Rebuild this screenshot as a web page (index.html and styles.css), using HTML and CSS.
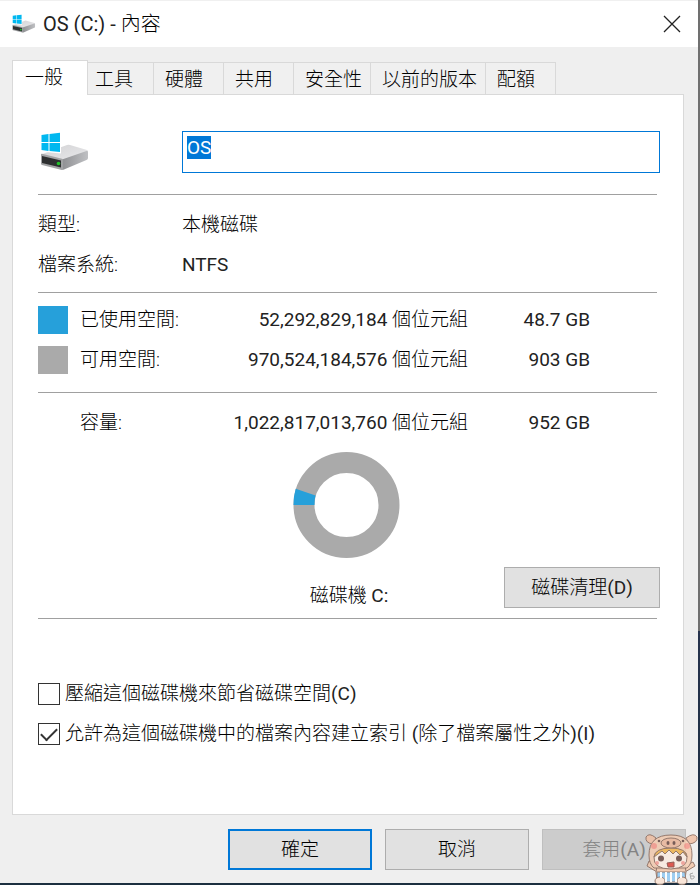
FILE: index.html
```html
<!DOCTYPE html>
<html lang="zh-Hant">
<head>
<meta charset="utf-8">
<title>OS (C:) - 內容</title>
<link rel="stylesheet" href="styles.css">
</head>
<body>
<svg class="defs" aria-hidden="true">
  <defs>
    <linearGradient id="driveTop" x1="0" y1="0" x2="1" y2="1">
      <stop offset="0" stop-color="#d2d2d4"/><stop offset="1" stop-color="#e9e9eb"/>
    </linearGradient>
    <linearGradient id="driveSide" x1="0" y1="0" x2="1" y2="0">
      <stop offset="0" stop-color="#8f9093"/><stop offset="1" stop-color="#bfc0c3"/>
    </linearGradient>
  </defs>
  <symbol id="drive" viewBox="0 0 50 40">
    <path fill="url(#driveTop)" d="M1 22.500L27 13q1.500-.5 3 0l17 5q2 1 0 2L23 28z"/>
    <path fill="url(#driveSide)" d="M22 27.500L46.500 19q1.500-.5 1.500 1v6q0 1.500-1.500 2L24 37.500q-2 .8-2-1z"/>
    <path fill="#a2a3a5" d="M1 22.500q0-1 1-.8l20 5q1 .3 1 1.300v9q0 1.200-1.200.9L2 33q-1-.3-1-1.300z"/>
    <path fill="#2d2f30" d="M2 24l19 4.500v7L2 31z"/>
    <circle cx="18.500" cy="31.500" r="1.800" fill="#22c02a"/>
    <path fill="#fff" d="M.5 1.500L21 0v21.500L.5 19.500z"/>
    <path fill="#00b8f0" d="M1.500 3l7-1v8h-7zM9.500 1.900L20 .8V10H9.500zM1.500 11h7v8l-7-1zM9.500 11H20v9l-10.500-1z"/>
  </symbol>
</svg>
<main class="dialog">
  <header class="titlebar">
    <svg class="title-icon" aria-hidden="true"><use href="#drive"/></svg>
    <h1 class="title"><span class="latin">OS (C:) - </span>內容</h1>
    <button class="close" type="button" aria-label="關閉">
      <svg viewBox="0 0 16 16" aria-hidden="true"><path d="M0 0L16 16M16 0L0 16"/></svg>
    </button>
  </header>

  <nav class="tabs" role="tablist">
    <button class="tab tab-active" type="button" role="tab" aria-selected="true">一般</button>
    <button class="tab" type="button" role="tab">工具</button>
    <button class="tab" type="button" role="tab">硬體</button>
    <button class="tab" type="button" role="tab">共用</button>
    <button class="tab" type="button" role="tab">安全性</button>
    <button class="tab" type="button" role="tab">以前的版本</button>
    <button class="tab" type="button" role="tab">配額</button>
  </nav>

  <section class="panel">
    <div class="identity">
      <svg class="drive-icon" aria-hidden="true"><use href="#drive"/></svg>
      <input id="volume" class="volume latin" type="text" value="OS" aria-label="磁碟機名稱" spellcheck="false">
    </div>
    <hr>
    <dl class="facts">
      <dt>類型:</dt><dd>本機磁碟</dd>
      <dt>檔案系統:</dt><dd class="latin">NTFS</dd>
    </dl>
    <hr>
    <div class="sizes sizes-parts">
      <span class="swatch swatch-used"></span><span>已使用空間:</span><span class="amount"><span class="latin">52,292,829,184</span> 個位元組</span><span class="amount latin">48.7 GB</span>
      <span class="swatch swatch-free"></span><span>可用空間:</span><span class="amount"><span class="latin">970,524,184,576</span> 個位元組</span><span class="amount latin">903 GB</span>
    </div>
    <hr>
    <div class="sizes sizes-total">
      <span></span><span>容量:</span><span class="amount"><span class="latin">1,022,817,013,760</span> 個位元組</span><span class="amount latin">952 GB</span>
    </div>
    <svg class="donut" viewBox="0 0 108 108" aria-hidden="true">
      <circle cx="54" cy="54" r="42.500" fill="none" stroke="#aaa" stroke-width="21"/>
      <path fill="#26a0da" d="M1 54A53 53 0 0 1 3.200 37.800L23 44.500A32 32 0 0 0 22 54z"/>
    </svg>
    <div class="drive-row">
      <span class="drive-name">磁碟機 <span class="latin">C:</span></span>
      <button class="btn cleanup" type="button">磁碟清理<span class="latin">(D)</span></button>
    </div>
    <hr>
    <div class="options">
      <label class="option"><input type="checkbox"><span>壓縮這個磁碟機來節省磁碟空間<span class="latin">(C)</span></span></label>
      <label class="option"><input type="checkbox" checked><span>允許為這個磁碟機中的檔案內容建立索引 <span class="latin">(</span>除了檔案屬性之外<span class="latin">)(I)</span></span></label>
    </div>
  </section>

  <footer class="actions">
    <button class="btn btn-default" type="button">確定</button>
    <button class="btn" type="button">取消</button>
    <button class="btn" type="button" disabled>套用<span class="latin">(A)</span></button>
  </footer>
</main>

<svg class="mascot" viewBox="0 0 54 52" aria-hidden="true">
  <g stroke="#8a6a5c" stroke-width="1" stroke-linejoin="round">
    <path fill="#f3c8ac" d="M11 32L4 28 2 33l10 6zM41 32l7-3 2 4-10 6z"/>
    <path fill="#f3c8ac" d="M12 32q-2 8 0 14h28q2-7 0-14z"/>
    <path fill="#f0c0a4" d="M11 5Q4-1 1 4q-1 6 7 7zM41 5q8-6 11-1 1 6-8 7z"/>
    <path fill="#f5cdb2" d="M4 22Q4 2 26 2q21 0 21 20 0 9-5 13H9Q4 31 4 22z"/>
    <path fill="#fff0e5" d="M9 24q0-8 17-8t16 8q1 11-16 12Q8 36 9 24z"/>
    <path fill="#f2b54f" d="M9 24q1-9 17-9 15 0 16 9l-4-5-3 3-4-4-3 3-4-4-4 4-3-3z"/>
    <ellipse cx="26" cy="10" rx="10" ry="5" fill="#eeb99c"/>
    <path fill="#8fc8f2" d="M12 39h28l1 10H12z"/>
    <ellipse cx="15" cy="48" rx="5" ry="4" fill="#fbe4d5"/>
    <ellipse cx="37" cy="48" rx="5" ry="4" fill="#fbe4d5"/>
  </g>
  <path stroke="#fff" stroke-width="2" d="M16 39v6M21 39v10M26 39v10M31 39v10M36 39v6" fill="none"/>
  <g fill="#6a4a44">
    <ellipse cx="23" cy="10" rx="1.500" ry="2"/><ellipse cx="29" cy="10" rx="1.500" ry="2"/>
    <circle cx="14" cy="8" r="1.300"/><circle cx="38" cy="8" r="1.300"/>
    <circle cx="16" cy="25.500" r="3"/><circle cx="34" cy="25.500" r="3"/>
  </g>
  <path fill="#e0463c" stroke="#8a4a42" d="M22 30l7-1v5h-6z"/>
  <g fill="#f58c82" opacity=".8"><circle cx="9" cy="13" r="3"/><circle cx="42" cy="13" r="3"/><circle cx="12" cy="30" r="2"/><circle cx="38" cy="30" r="2"/></g>
  <path fill="none" stroke="#999" d="M48 40l-3 1 1 5q4 0 3-3l-3 0"/>
</svg>
<script src="script.js"></script>
</body>
</html>
```
FILE: styles.css
```css
* { box-sizing: border-box; }

body {
  margin: 0;
  min-height: 100vh;
  padding: 0 2px 2px 0;
  display: flex;
  background: linear-gradient(#707070 631px, #26334d 631px, #1c2f40);
  color: #000;
  font: 300 19px/24px Roboto, "Noto Sans CJK TC", sans-serif;
  position: relative;
}

button, input { font: inherit; color: inherit; }

.latin { font-weight: 400; color: #222; }

.defs { position: absolute; width: 0; height: 0; }

.dialog {
  flex: 1;
  display: flex;
  flex-direction: column;
  background: #efefef;
}

.titlebar {
  display: flex;
  align-items: center;
  height: 47px;
  padding: 0 18px 0 12px;
  background: #fff;
  border-top: 1px solid #f0f0f0;
}

.title-icon { width: 24px; height: 20px; margin-right: 7px; }
.title { margin: 0; flex: 1; font-size: 20px; font-weight: inherit; }

.close { padding: 0; border: 0; background: none; display: flex; }
.close svg { width: 16px; height: 16px; stroke: #222; stroke-width: 1.3; overflow: visible; }

.tabs {
  display: flex;
  align-items: flex-end;
  padding: 13px 14px 0 12px;
}

.tab {
  min-width: 70px;
  height: 32px;
  padding: 2px 8px 0 11px;
  border: 1px solid #d9d9d9;
  border-width: 1px 1px 0 0;
  background: #f0f0f0;
  text-align: left;
}

.tab-active {
  min-width: 76px;
  height: 35px;
  margin: 0 -4px -1px 0;
  padding: 0 12px 1px;
  border-left-width: 1px;
  background: #fff;
  position: relative;
}

.panel {
  flex: 1;
  margin: 0 14px 0 12px;
  padding: 36px 23px 0 25px;
  background: #fff;
  border: 1px solid #d9d9d9;
}

hr {
  height: 1px;
  margin: 0 3px 0 0;
  border: 0;
  background: #a0a0a0;
}

.identity { display: flex; padding-bottom: 21px; }
.drive-icon { width: 50px; height: 40px; margin: 1px 92px 0 2px; }

.volume {
  flex: 1;
  min-width: 0;
  height: 42px;
  padding: 3px 4px 13px;
  border: 1px solid #0078d7;
  border-radius: 0;
  outline: 0;
  background: #fff;
}
.volume::selection { background: #0078d7; color: #fff; }

.facts {
  display: grid;
  grid-template-columns: 144px 1fr;
  margin: 0;
  padding: 10px 0 7px;
  line-height: 40px;
}
.facts dd { margin: 0; }

.sizes {
  display: grid;
  grid-template-columns: 42px 110px minmax(0, 278px) 122px;
  align-items: center;
  line-height: 40px;
}
.sizes-parts { padding: 7px 0 12px; }
.sizes-total { padding: 10px 0 8px; }
.amount { text-align: right; }
.swatch { width: 30px; height: 28px; }
.swatch-used { background: #26a0da; }
.swatch-free { background: #aaa; }

.donut { display: block; width: calc(100% - 5px); height: 108px; }

.drive-row {
  display: grid;
  grid-template-columns: 1fr auto 1fr;
  align-items: end;
  padding: 8px 0 10px;
}
.drive-name { grid-column: 2; }

.btn {
  width: 144px;
  height: 41px;
  padding: 0;
  border: 1px solid #adadad;
  background: #e1e1e1;
}
.cleanup { width: 156px; justify-self: end; }
.btn-default { border: 2px solid #0078d7; }
.btn:disabled { background: #ccc; border-color: #bfbfbf; color: #838383; }
.btn:disabled .latin { color: inherit; }

.options { padding-top: 55px; }
.option { display: flex; align-items: center; height: 40px; gap: 5px; }

.option input {
  appearance: none;
  display: grid;
  place-items: center;
  flex: none;
  width: 22px;
  height: 22px;
  margin: 0;
  border: 1px solid #333;
  background: #fff;
}
.option input:checked::before {
  content: "";
  width: 14px;
  height: 7px;
  margin-bottom: 4px;
  border: solid #333;
  border-width: 0 0 2px 2px;
  transform: rotate(-45deg);
}

.actions {
  display: flex;
  justify-content: flex-end;
  gap: 13px;
  padding: 14px 12px 13px;
}

.mascot {
  position: absolute;
  right: 1px;
  bottom: 0;
  width: 54px;
  height: 52px;
  opacity: .85;
}
```
FILE: script.js
```js
const volume = document.getElementById("volume");
volume.focus();
volume.select();
```
